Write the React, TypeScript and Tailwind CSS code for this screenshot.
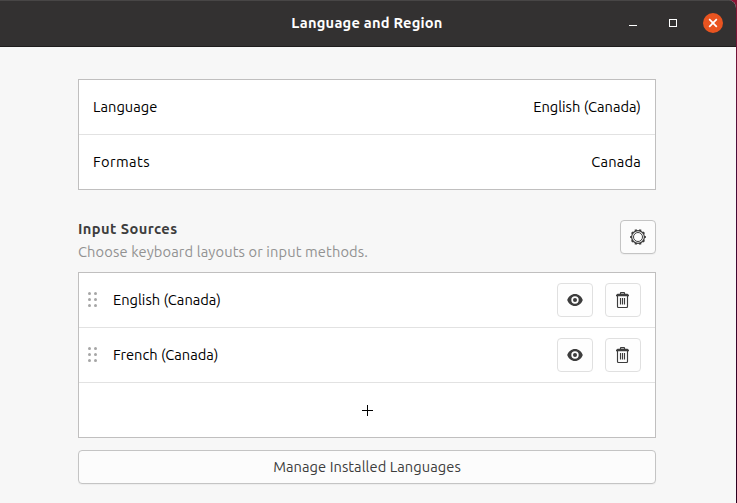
import type { ReactNode } from "react";

function Minimize() {
  return (
    <svg width="16" height="16" viewBox="0 0 16 16" shapeRendering="crispEdges">
      <rect x="4" y="10" width="8" height="1" fill="#fff" />
    </svg>
  );
}

function Maximize() {
  return (
    <svg width="16" height="16" viewBox="0 0 16 16" shapeRendering="crispEdges">
      <rect x="4.5" y="4.5" width="7" height="7" fill="none" stroke="#fff" />
    </svg>
  );
}

function Close() {
  return (
    <svg width="20" height="20" viewBox="0 0 20 20">
      <circle cx="10" cy="10" r="10" fill="#e95420" />
      <path d="M6.2 6.2l7.6 7.6M13.8 6.2l-7.6 7.6" stroke="#fff" strokeWidth="1.7" />
    </svg>
  );
}

function Gear() {
  const teeth = Array.from({ length: 10 }, (_, i) => i * 36);
  return (
    <svg width="16" height="16" viewBox="0 0 16 16" fill="none" stroke="#3d3d3d">
      <circle cx="8" cy="8" r="6.4" strokeWidth="1.2" />
      <circle cx="8" cy="8" r="4.5" strokeWidth="1" />
      {teeth.map((a) => (
        <path key={a} d="M6.9 1h2.2" strokeWidth="1.7" transform={`rotate(${a + 18} 8 8)`} />
      ))}
    </svg>
  );
}

function Eye() {
  return (
    <svg width="16" height="16" viewBox="0 0 16 16">
      <path
        fill="#3d3d3d"
        fillRule="evenodd"
        d="M8 2C4.4 2 1.5 4.5.2 8c1.3 3.5 4.2 6 7.8 6s6.5-2.5 7.8-6C14.5 4.5 11.6 2 8 2zM8 4.3a3.7 3.7 0 1 1 0 7.4 3.7 3.7 0 0 1 0-7.4z"
      />
      <circle cx="8" cy="8" r="2" fill="#3d3d3d" />
    </svg>
  );
}

function Trash() {
  return (
    <svg width="16" height="16" viewBox="0 0 16 16" fill="none" stroke="#3d3d3d">
      <path d="M5.5 2.5v-1.500q0-.3.5-.3h3q.5 0 .5.3v1.500" strokeWidth="1.2" />
      <path d="M1 4.300V3l1.500-1.200h10L14 3v1.300z" fill="#3d3d3d" stroke="none" />
      <path d="M2.5 4v10.500q0 1 1 1h8q1 0 1-1V4" strokeWidth="1.150" />
      <path d="M5.5 6v6.500M7.500 6v6.500M9.500 6v6.500" strokeWidth="1.150" />
    </svg>
  );
}

function Grip() {
  return (
    <svg width="10" height="16" viewBox="0 0 10 16" fill="#a6a6a6">
      {[1.5, 7.5, 13.5].map((y) => (
        <g key={y}>
          <circle cx="1.5" cy={y} r="1.5" />
          <circle cx="7.5" cy={y} r="1.5" />
        </g>
      ))}
    </svg>
  );
}

function IconButton({ label, children }: { label: string; children: ReactNode }) {
  return (
    <button
      aria-label={label}
      className="flex h-[34px] w-9 items-center justify-center rounded border border-[#e0e0e0] bg-[#fefefe]"
    >
      {children}
    </button>
  );
}

function SettingRow({ children }: { children: ReactNode }) {
  return <div className="flex h-[54px] items-center justify-between px-3.5">{children}</div>;
}

function SourceRow({ children }: { children: ReactNode }) {
  return (
    <div className="flex h-[55px] items-center border-b border-[#e2e2e2] pr-3.5 pl-[9px]">
      <Grip />
      <span className="ml-[15px] grow">{children}</span>
      <div className="flex gap-3">
        <IconButton label="Preview layout"><Eye /></IconButton>
        <IconButton label="Remove"><Trash /></IconButton>
      </div>
    </div>
  );
}

export default function App() {
  return (
    <div className="h-[503px] w-[737px] overflow-hidden bg-linear-to-b from-[#8b1435] via-[#4a0d3a] via-30% to-[#2c001e] pr-px font-[Ubuntu,'Noto_Sans',sans-serif] text-[14.667px] leading-5 text-black">
      <div className="h-full overflow-hidden rounded-tr-lg bg-[#f7f7f7]">
        <header className="grid h-[47px] grid-cols-[1fr_auto_1fr] items-center border-t border-b border-t-[#484646] border-b-[#1f1d1d] bg-[#333131] pr-[13px]">
          <span />
          <h1 className="pb-0.5 pl-[11px] font-bold tracking-[0.22px] text-white">Language and Region</h1>
          <div className="flex items-center justify-end pb-px">
            <Minimize />
            <span className="ml-6 flex"><Maximize /></span>
            <span className="ml-[22px] flex"><Close /></span>
          </div>
        </header>
        <main className="pt-8 pr-20 pl-[78px]">
          <section className="border border-[#c0bfbf] bg-white">
            <SettingRow>
              <span>Language</span>
              <span>English (Canada)</span>
            </SettingRow>
            <div className="h-px bg-[#e2e2e2]" />
            <SettingRow>
              <span className="tracking-[0.4px]">Formats</span>
              <span className="tracking-[0.2px]">Canada</span>
            </SettingRow>
          </section>
          <div className="mt-[29px] flex h-[53px] justify-between">
            <div>
              <h2 className="h-[23px] font-bold tracking-[0.42px] text-[#3d3d3d]">Input Sources</h2>
              <p className="tracking-[0.12px] text-[#929292]">Choose keyboard layouts or input methods.</p>
            </div>
            <button
              aria-label="Options"
              className="mt-px flex h-[34px] w-9 items-center justify-center rounded border border-[#c4c4c4] bg-[#fcfcfc] shadow-[0_1px_1px_#0000000a]"
            >
              <Gear />
            </button>
          </div>
          <section className="border border-[#c0bfbf] bg-white">
            <SourceRow>English (Canada)</SourceRow>
            <SourceRow>French (Canada)</SourceRow>
            <button aria-label="Add input source" className="flex h-[54px] w-full items-center justify-center">
              <svg width="12" height="12" viewBox="0 0 12 12" shapeRendering="crispEdges">
                <path d="M6.5 1v11M1 6.5h11" stroke="#000" />
              </svg>
            </button>
          </section>
          <button className="mt-3 flex h-[34px] w-full items-center justify-center rounded border border-[#c4c4c4] bg-[#fcfcfc] tracking-[0.06px] text-[#3d3d3d] shadow-[0_1px_1px_#0000000a]">
            Manage Installed Languages
          </button>
        </main>
      </div>
    </div>
  );
}
